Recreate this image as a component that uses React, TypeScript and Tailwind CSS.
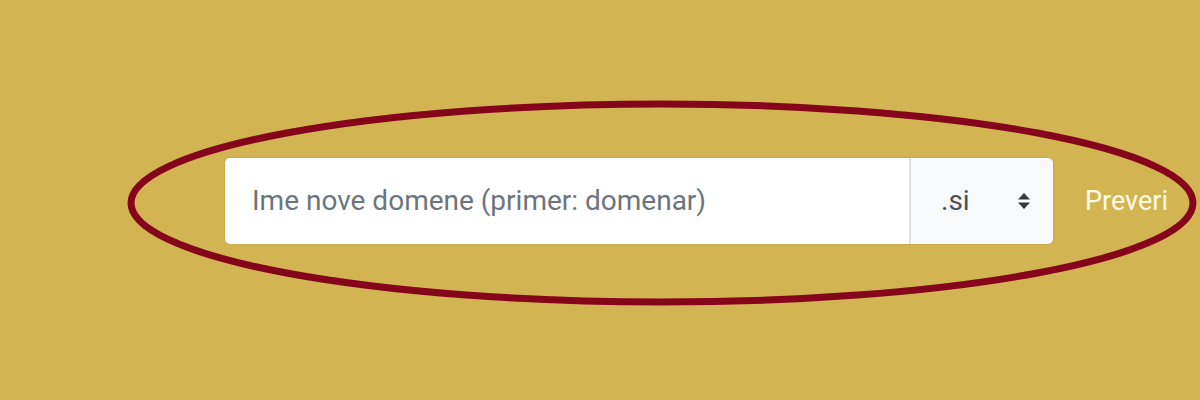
import React from "react";

export default function App() {
  return (
    <div className="relative w-[1200px] h-[400px] bg-[#d3b453] overflow-hidden" style={{ fontFamily: "Roboto, 'Liberation Sans', sans-serif" }}>
      <div className="flex items-center pt-[158px] pl-[225px]">
        <div className="flex h-[86px] w-[828px] rounded-[5px] overflow-hidden shadow-[0_0_2px_rgba(0,0,0,0.15)]">
          <div className="flex items-center w-[684px] bg-white pl-[27px] text-[28px] text-[#6c757d]">
            Ime nove domene (primer: domenar)
          </div>
          <div className="flex items-center justify-between w-[144px] bg-[#f8f9fa] border-l-2 border-[#dde0e3] pl-[30px] pr-[22px] text-[28px] text-[#495057]">
            <span>.si</span>
            <svg width="14" height="18" viewBox="0 0 14 18">
              <path d="M7 1 L13 7.5 H1 Z" fill="#343a40" />
              <path d="M7 17 L13 10.5 H1 Z" fill="#343a40" />
            </svg>
          </div>
        </div>
        <div className="ml-[32px] text-[27px] text-[#fffbe3]">Preveri</div>
      </div>
      <svg className="absolute left-0 top-0 pointer-events-none" width="1200" height="400">
        <ellipse cx="662" cy="203" rx="531" ry="99" fill="none" stroke="#85061a" strokeWidth="7" />
      </svg>
    </div>
  );
}
